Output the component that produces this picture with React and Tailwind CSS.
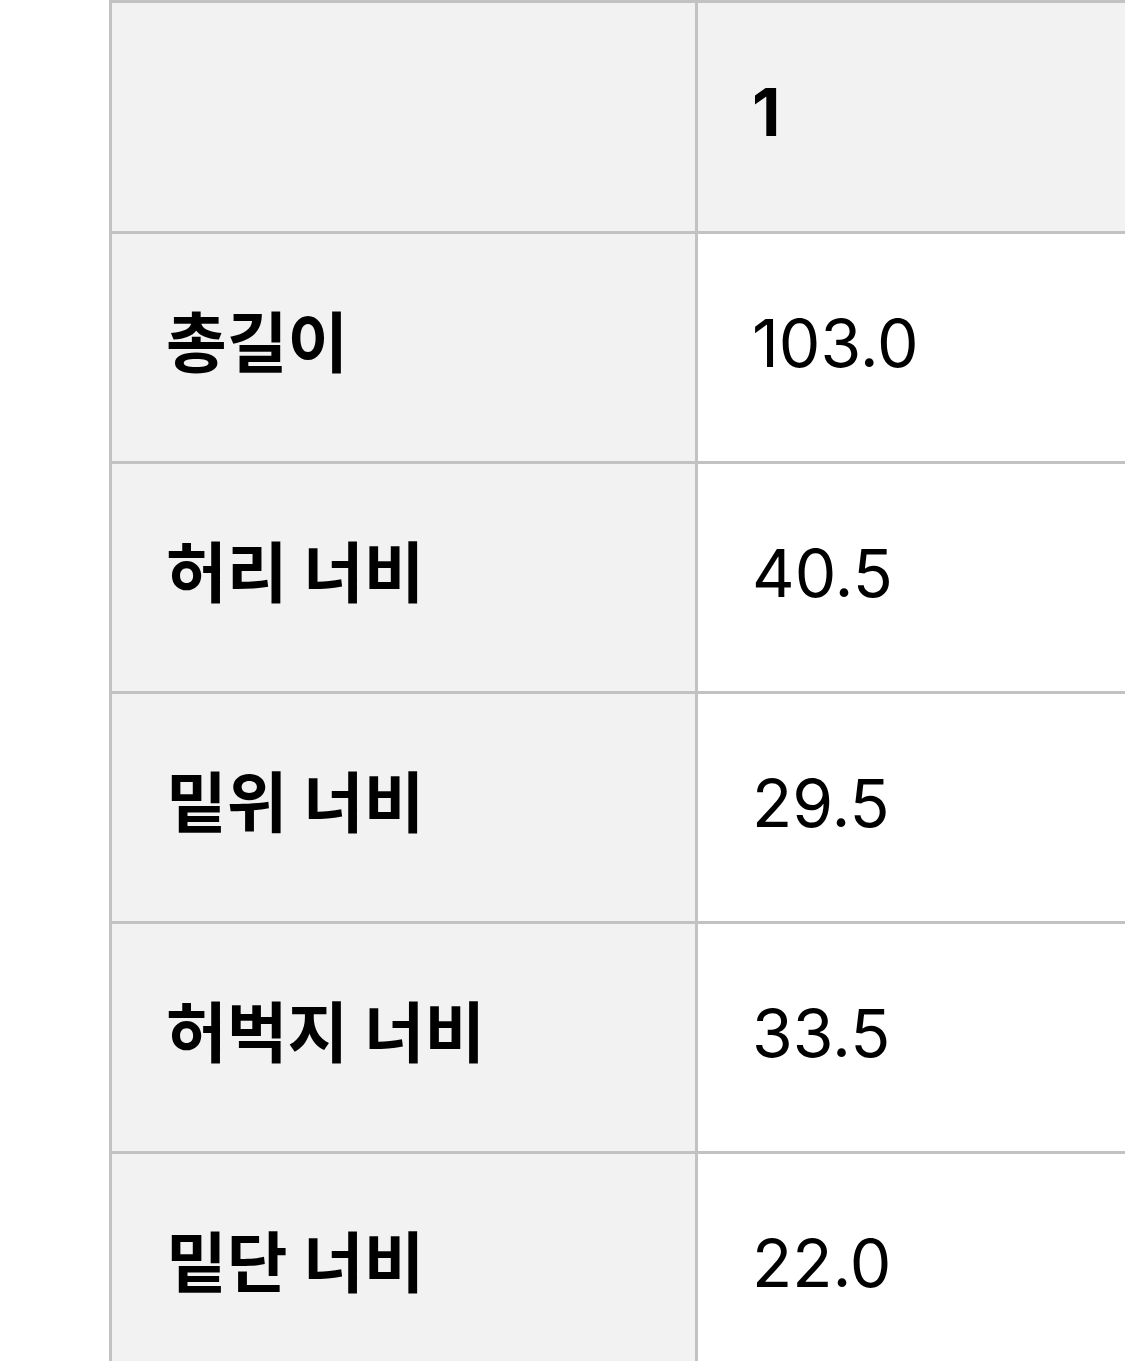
const rows = [
  ['총길이', '103.0'],
  ['허리 너비', '40.5'],
  ['밑위 너비', '29.5'],
  ['허벅지 너비', '33.5'],
  ['밑단 너비', '22.0'],
];

export default function App() {
  return (
    <div
      className="h-[1361px] w-[1125px] overflow-hidden bg-white pl-[109px] text-black"
      style={{ fontFamily: 'Inter, "Noto Sans CJK KR", "Noto Sans", sans-serif' }}
    >
      <table className="w-[1100px] table-fixed border-collapse text-[66px] leading-none">
        <colgroup>
          <col className="w-[586px]" />
          <col />
        </colgroup>
        <tbody>
          <tr className="h-[231px] bg-[#f2f2f2]">
            <th className="border-[3px] border-[#c2c2c2]" />
            <th className="border-[3px] border-[#c2c2c2] pb-[10px] pl-[54px] text-left font-bold">1</th>
          </tr>
          {rows.map(([label, value]) => (
            <tr key={label} className="h-[230px]">
              <th className="border-[3px] border-[#c2c2c2] bg-[#f2f2f2] pb-[10px] pl-[54px] text-left font-bold">
                {label}
              </th>
              <td className="border-[3px] border-[#c2c2c2] bg-white pb-[10px] pl-[54px] font-normal">{value}</td>
            </tr>
          ))}
        </tbody>
      </table>
    </div>
  );
}
